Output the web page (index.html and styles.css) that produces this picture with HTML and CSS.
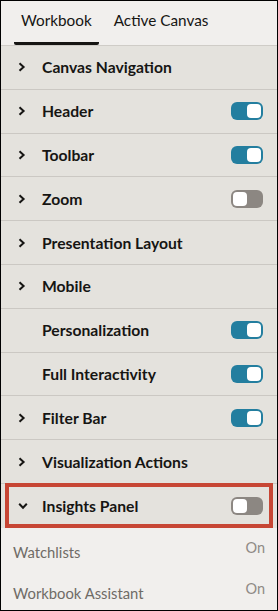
FILE: index.html
```html
<!DOCTYPE html>
<html lang="en">
<head>
<meta charset="utf-8">
<title>Workbook properties</title>
<link rel="stylesheet" href="styles.css">
</head>
<body>
<div class="panel">
  <div class="tabs">
    <div class="tab active">Workbook</div>
    <div class="tab">Active Canvas</div>
  </div>
  <div class="rows">
    <div class="row">
      <span class="chev"><svg viewBox="0 0 8 10" width="8" height="10"><path d="M1.5 1.2 L5.6 5 L1.5 8.8" fill="none" stroke="#161513" stroke-width="2"/></svg></span>
      <span class="label">Canvas Navigation</span>
    </div>
    <div class="row">
      <span class="chev"><svg viewBox="0 0 8 10" width="8" height="10"><path d="M1.5 1.2 L5.6 5 L1.5 8.8" fill="none" stroke="#161513" stroke-width="2"/></svg></span>
      <span class="label">Header</span>
      <span class="switch on"><span class="knob"></span></span>
    </div>
    <div class="row">
      <span class="chev"><svg viewBox="0 0 8 10" width="8" height="10"><path d="M1.5 1.2 L5.6 5 L1.5 8.8" fill="none" stroke="#161513" stroke-width="2"/></svg></span>
      <span class="label">Toolbar</span>
      <span class="switch on"><span class="knob"></span></span>
    </div>
    <div class="row">
      <span class="chev"><svg viewBox="0 0 8 10" width="8" height="10"><path d="M1.5 1.2 L5.6 5 L1.5 8.8" fill="none" stroke="#161513" stroke-width="2"/></svg></span>
      <span class="label">Zoom</span>
      <span class="switch off"><span class="knob"></span></span>
    </div>
    <div class="row">
      <span class="chev"><svg viewBox="0 0 8 10" width="8" height="10"><path d="M1.5 1.2 L5.6 5 L1.5 8.8" fill="none" stroke="#161513" stroke-width="2"/></svg></span>
      <span class="label">Presentation Layout</span>
    </div>
    <div class="row">
      <span class="chev"><svg viewBox="0 0 8 10" width="8" height="10"><path d="M1.5 1.2 L5.6 5 L1.5 8.8" fill="none" stroke="#161513" stroke-width="2"/></svg></span>
      <span class="label">Mobile</span>
    </div>
    <div class="row">
      <span class="chev"></span>
      <span class="label">Personalization</span>
      <span class="switch on"><span class="knob"></span></span>
    </div>
    <div class="row">
      <span class="chev"></span>
      <span class="label">Full Interactivity</span>
      <span class="switch on"><span class="knob"></span></span>
    </div>
    <div class="row">
      <span class="chev"><svg viewBox="0 0 8 10" width="8" height="10"><path d="M1.5 1.2 L5.6 5 L1.5 8.8" fill="none" stroke="#161513" stroke-width="2"/></svg></span>
      <span class="label">Filter Bar</span>
      <span class="switch on"><span class="knob"></span></span>
    </div>
    <div class="row">
      <span class="chev"><svg viewBox="0 0 8 10" width="8" height="10"><path d="M1.5 1.2 L5.6 5 L1.5 8.8" fill="none" stroke="#161513" stroke-width="2"/></svg></span>
      <span class="label">Visualization Actions</span>
    </div>
    <div class="row highlighted">
      <span class="chev"><svg viewBox="0 0 10 8" width="10" height="8"><path d="M1.2 1.8 L5 5.8 L8.8 1.8" fill="none" stroke="#161513" stroke-width="2"/></svg></span>
      <span class="label">Insights Panel</span>
      <span class="switch off"><span class="knob"></span></span>
    </div>
  </div>
  <div class="subitems">
    <div class="subrow"><span class="sublabel">Watchlists</span><span class="value">On</span></div>
    <div class="subrow"><span class="sublabel">Workbook Assistant</span><span class="value">On</span></div>
  </div>
</div>
</body>
</html>
```

FILE: styles.css
```css
html, body {
  margin: 0;
  padding: 0;
  background: #f1efed;
}

.panel {
  width: 278px;
  height: 611px;
  box-sizing: border-box;
  border: 1px solid #000;
  background: #f1efed;
  font-family: Lato, "Noto Sans", sans-serif;
  color: #161513;
  overflow: hidden;
}

.tabs {
  display: flex;
  gap: 8px;
  height: 44px;
  padding-left: 13px;
  border-bottom: 1px solid #cfccc7;
  background: #f1efed;
}

.tab {
  display: flex;
  align-items: center;
  padding: 0 7px 3px;
  font-size: 15.3px;
  color: #161513;
  border-bottom: 3px solid transparent;
  border-radius: 2px;
}

.tab.active {
  border-bottom-color: #161513;
}

.rows {
  background: #e4e2dd;
}

.row {
  position: relative;
  display: flex;
  align-items: center;
  height: 42.8px;
  border-bottom: 1px solid #cbc8c3;
  padding: 0 14px 0 17px;
}

.row.highlighted {
  border-bottom: none;
  height: 44px;
}

.row.highlighted::after {
  content: "";
  position: absolute;
  left: 4px;
  right: 4px;
  top: -1px;
  bottom: 0;
  border: 4px solid #c74634;
}

.chev {
  width: 24px;
  display: flex;
  align-items: center;
}

.label {
  flex: 1;
  font-size: 15.7px;
  font-weight: 700;
}

.switch {
  display: flex;
  align-items: center;
  width: 32px;
  height: 18px;
  box-sizing: border-box;
  padding: 2px;
  border-radius: 6px;
}

.switch.on {
  background: #237e9f;
  justify-content: flex-end;
}

.switch.off {
  background: #8c8782;
  justify-content: flex-start;
}

.knob {
  width: 14px;
  height: 14px;
  border-radius: 4px;
  background: #fff;
}

.subitems {
  padding: 0 12px 0 12px;
}

.subrow {
  display: flex;
  justify-content: space-between;
  align-items: flex-start;
  height: 41px;
}

.subrow:first-child {
  padding-top: 14px;
}

.sublabel {
  font-size: 14.8px;
  color: #6f6b66;
  line-height: 20px;
}

.value {
  font-size: 14.5px;
  color: #8f8a85;
  line-height: 20px;
  margin-top: -4px;
}
```
